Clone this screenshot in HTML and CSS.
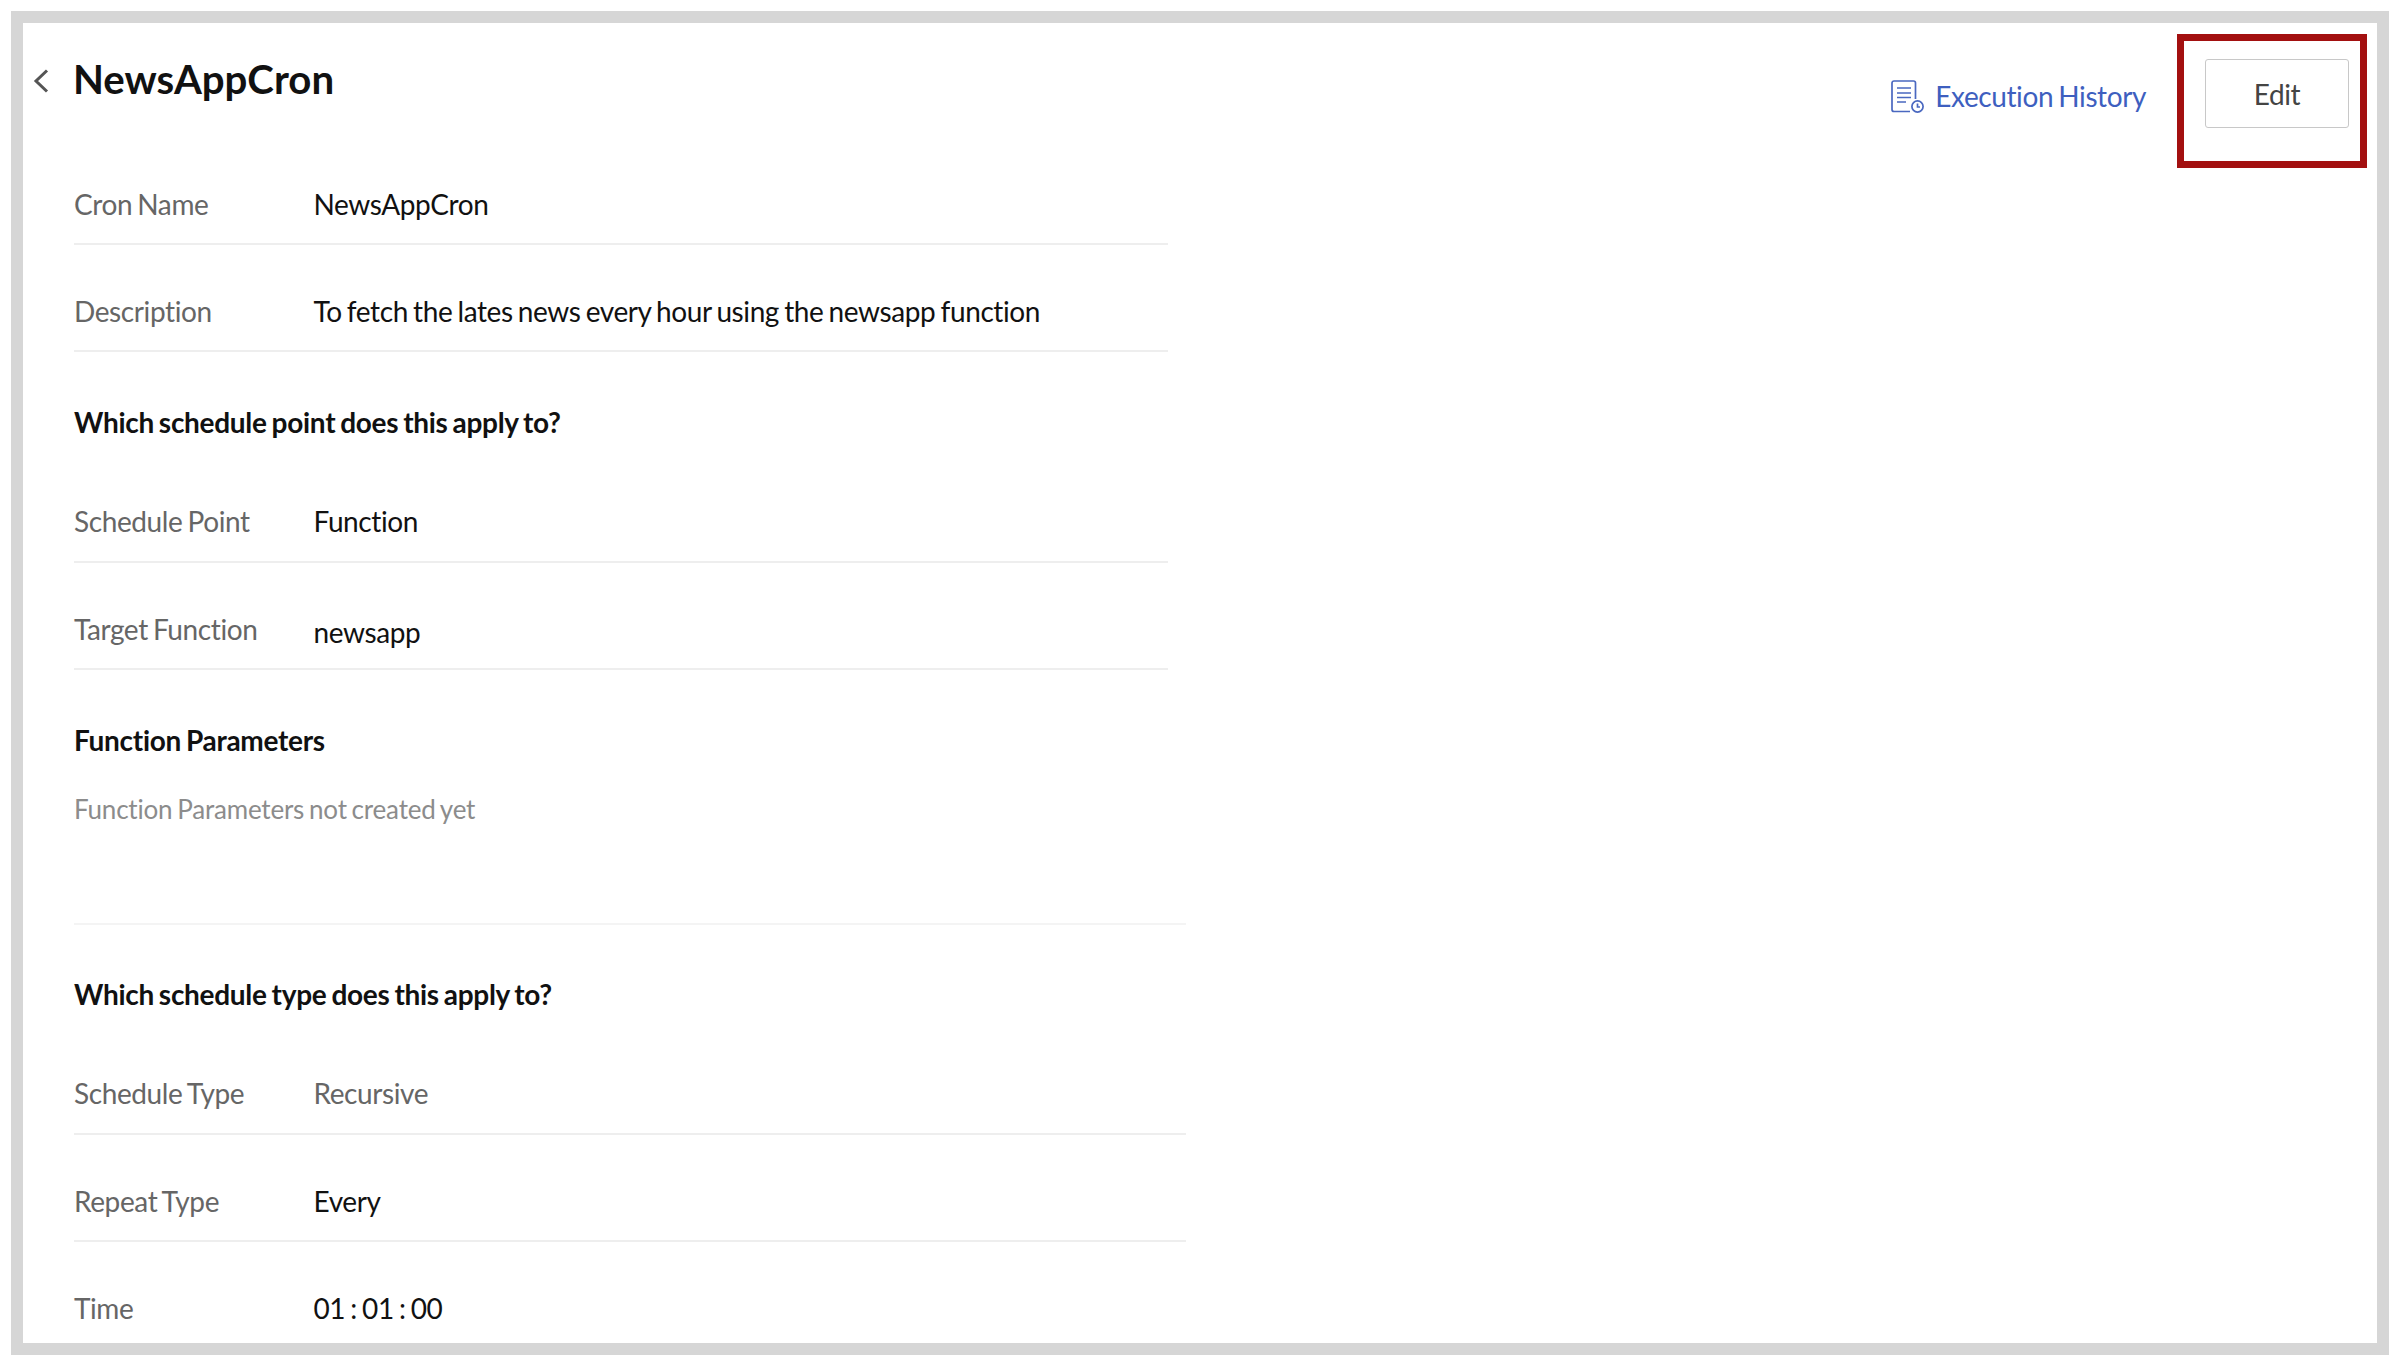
FILE: index.html
```html
<!DOCTYPE html>
<html lang="en">
<head>
<meta charset="utf-8">
<title>NewsAppCron</title>
<link rel="stylesheet" href="styles.css">
</head>
<body>
<main class="frame">
  <header class="topbar">
    <div class="title-group">
      <svg class="back" width="16" height="26" viewBox="0 0 16 26" fill="none"><path d="M14 2.5 L3 13 L14 23.5" stroke="#555" stroke-width="3"/></svg>
      <h1 class="title">NewsAppCron</h1>
    </div>
    <div class="actions">
      <a class="history">
        <svg class="history-icon" width="34" height="33" viewBox="0 0 34 33" fill="none" stroke="#4a68c0" stroke-width="1.7">
          <path d="M24.5 19 V3 a2 2 0 0 0 -2 -2 H3 a2 2 0 0 0 -2 2 V29.500 a2 2 0 0 0 2 2 H19"/>
          <path d="M6 8 H20 M6 13 H20 M6 17.500 H20 M6 22 H15"/>
          <circle cx="26.500" cy="26.500" r="5.600"/>
          <path d="M26.500 23.500 V27 H29"/>
        </svg>
        <span>Execution History</span>
      </a>
      <div class="highlight"><button class="edit">Edit</button></div>
    </div>
  </header>
  <section class="content">
    <div class="row"><span class="label">Cron Name</span><span class="value">NewsAppCron</span></div>
    <div class="row"><span class="label">Description</span><span class="value">To fetch the lates news every hour using the newsapp function</span></div>
    <h2 class="heading">Which schedule point does this apply to?</h2>
    <div class="row after-heading"><span class="label">Schedule Point</span><span class="value">Function</span></div>
    <div class="row"><span class="label">Target Function</span><span class="value low">newsapp</span></div>
    <h2 class="heading">Function Parameters</h2>
    <p class="empty">Function Parameters not created yet</p>
    <hr class="divider">
    <h2 class="heading second">Which schedule type does this apply to?</h2>
    <div class="row after-heading wide"><span class="label">Schedule Type</span><span class="value muted">Recursive</span></div>
    <div class="row wide"><span class="label">Repeat Type</span><span class="value">Every</span></div>
    <div class="row wide last"><span class="label">Time</span><span class="value">01 : 01 : 00</span></div>
  </section>
</main>
</body>
</html>
```
FILE: styles.css
```css
* { box-sizing: border-box; }
html, body { margin: 0; height: 100%; overflow: hidden; background: #fff; }
body { padding: 11px; font-family: Lato, "Open Sans", sans-serif; color: #111; letter-spacing: -0.4px; word-spacing: -1.6px; }
.frame { height: 1344px; border: 12px solid #d6d6d6; background: #fff; overflow: hidden; }
.topbar { display: flex; justify-content: space-between; align-items: flex-start; padding: 11px 10px 0 10px; }
.title-group { display: flex; align-items: center; gap: 24px; padding-top: 18px; }
.back { display: block; margin-top: 3px; }
.title { margin: 0; font-size: 40.2px; line-height: 54px; font-weight: 700; color: #111; letter-spacing: 0; }
.actions { display: flex; align-items: flex-start; }
.history { display: flex; align-items: center; gap: 10px; margin: 44px 31px 0 0; font-size: 28px; line-height: 36px; color: #3e5fbf; }
.history-icon { display: block; }
.highlight { width: 190px; height: 134px; border: 7px solid #a31010; padding: 18px 0 0 21px; }
.edit { display: block; width: 144px; height: 69px; padding: 0; background: #fff; border: 1px solid #c8c8c8; border-radius: 3px; font-family: inherit; font-size: 28px; letter-spacing: inherit; color: #444; }
.content { margin-top: -30px; padding-left: 51px; }
.row { display: flex; align-items: center; width: 1094px; height: 107px; border-bottom: 2px solid #eee; padding-top: 26px; font-size: 28px; line-height: 36px; }
.row.wide { width: 1112px; }
.row.after-heading { height: 122px; padding-top: 39px; }
.row.last { border-bottom: 0; padding-top: 24px; }
.label { flex: 0 0 239.5px; color: #666; }
.value { color: #111; }
.value.muted { color: #666; }
.value.low { position: relative; top: 3px; }
.heading { margin: 0; padding: 52px 0 1px; font-size: 28px; line-height: 36px; font-weight: 700; color: #111; letter-spacing: -0.29px; }
.empty { margin: 0; padding-top: 32px; font-size: 26px; line-height: 36px; color: #8c8c8c; letter-spacing: -0.2px; }
.divider { margin: 96px 0 0; width: 1112px; height: 2px; border: 0; background: #f4f4f4; }
.heading.second { padding-top: 51px; }
```
